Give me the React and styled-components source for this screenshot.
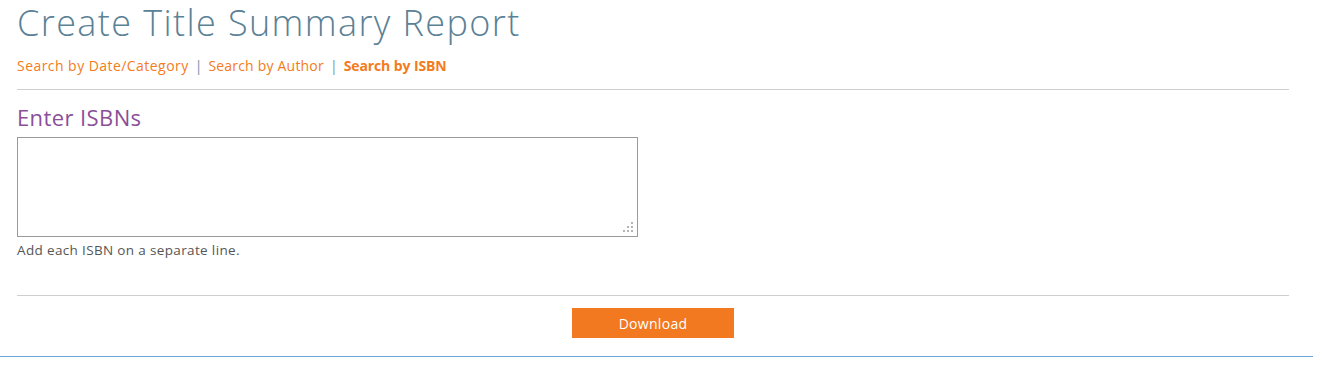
import React from "react";
import styled, { createGlobalStyle } from "styled-components";

const Global = createGlobalStyle`
  html, body { margin: 0; padding: 0; background: #fff; }
  body { font-family: "Open Sans", "Lato", sans-serif; }
`;

const Page = styled.div`
  width: 1313px;
  border-bottom: 1px solid #6aa5db;
  padding: 0 24px 18px 17px;
  box-sizing: border-box;
`;

const Title = styled.h1`
  margin: 0;
  font-size: 36px;
  font-weight: 300;
  color: #5a8195;
  line-height: 46px;
  letter-spacing: 1.4px;
`;

const Nav = styled.nav`
  display: flex;
  align-items: center;
  gap: 6px;
  margin-top: 10px;
  font-size: 14px;
  line-height: 20px;
`;

const NavLink = styled.a`
  color: #f47b20;
  font-weight: ${(p) => (p.$active ? 700 : 400)};
  letter-spacing: ${(p) => p.$ls || "0.35px"};
  text-decoration: none;
  cursor: pointer;
`;

const Sep = styled.span`
  color: #7890ad;
`;

const Rule = styled.hr`
  border: 0;
  border-top: 1px solid #cfcfcf;
  margin: ${(p) => p.$margin};
`;

const SectionTitle = styled.h2`
  margin: 0;
  font-size: 22px;
  font-weight: 400;
  color: #8a4f98;
  line-height: 30px;
  letter-spacing: 0.4px;
`;

const Field = styled.div`
  position: relative;
  width: 621px;
  margin-top: 5px;

  &::after {
    content: "";
    position: absolute;
    right: 5px;
    bottom: 5px;
    width: 10px;
    height: 10px;
    pointer-events: none;
    background:
      linear-gradient(#b4b4b4, #b4b4b4) 8px 0 / 2px 2px no-repeat,
      linear-gradient(#b4b4b4, #b4b4b4) 4px 4px / 2px 2px no-repeat,
      linear-gradient(#b4b4b4, #b4b4b4) 8px 4px / 2px 2px no-repeat,
      linear-gradient(#b4b4b4, #b4b4b4) 0 8px / 2px 2px no-repeat,
      linear-gradient(#b4b4b4, #b4b4b4) 4px 8px / 2px 2px no-repeat,
      linear-gradient(#b4b4b4, #b4b4b4) 8px 8px / 2px 2px no-repeat;
  }
`;

const TextArea = styled.textarea`
  display: block;
  width: 100%;
  height: 100px;
  box-sizing: border-box;
  border: 1px solid #9a9a9a;
  padding: 4px;
  font-family: inherit;
  resize: none;
  outline: none;
`;

const Help = styled.p`
  margin: 3px 0 0;
  font-size: 13.5px;
  color: #555;
  line-height: 20px;
  letter-spacing: 0.35px;
`;

const Actions = styled.div`
  display: flex;
  justify-content: center;
`;

const Button = styled.button`
  width: 162px;
  height: 30px;
  background: #f37920;
  color: #fff;
  border: 0;
  font-family: inherit;
  font-size: 14px;
  font-weight: 400;
  letter-spacing: 0.3px;
  cursor: pointer;
`;

export default function App() {
  return (
    <>
      <Global />
      <Page>
        <Title>Create Title Summary Report</Title>
        <Nav>
          <NavLink $ls="0.45px">Search by Date/Category</NavLink>
          <Sep>|</Sep>
          <NavLink $ls="0.2px">Search by Author</NavLink>
          <Sep>|</Sep>
          <NavLink $active $ls="-0.1px">Search by ISBN</NavLink>
        </Nav>
        <Rule $margin="13px 0 12px" />
        <SectionTitle>Enter ISBNs</SectionTitle>
        <Field>
          <TextArea />
        </Field>
        <Help>Add each ISBN on a separate line.</Help>
        <Rule $margin="35px 0 12px" />
        <Actions>
          <Button>Download</Button>
        </Actions>
      </Page>
    </>
  );
}
